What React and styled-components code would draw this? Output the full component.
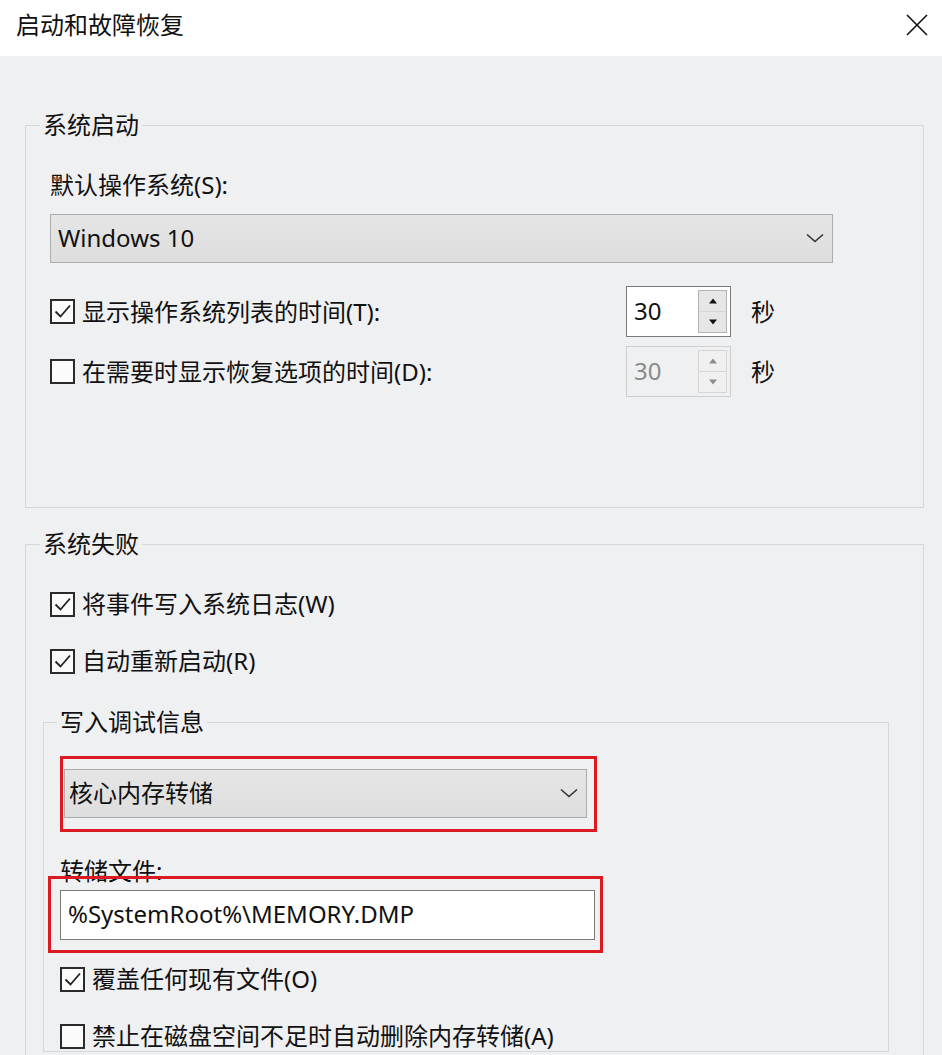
import styled, { createGlobalStyle } from 'styled-components';

const GlobalStyle = createGlobalStyle`
  html, body {
    margin: 0;
    padding: 0;
    background: #eff0f2;
  }
  * {
    box-sizing: border-box;
  }
`;

const font = `"Noto Sans", "Noto Sans CJK SC", sans-serif`;

const Window = styled.div`
  width: 942px;
  height: 1055px;
  overflow: hidden;
  background: #eff0f2;
  font-family: ${font};
  font-size: 24px;
  color: #111;
`;

const TitleBar = styled.header`
  height: 56px;
  background: #fff;
  display: flex;
  align-items: center;
  justify-content: space-between;
  padding: 0 14px 6px 16px;
`;

const Title = styled.h1`
  margin: 0;
  font-size: 24px;
  font-weight: 400;
  line-height: 30px;
  color: #111;
`;

const CloseButton = styled.button`
  border: 0;
  padding: 0;
  background: none;
  width: 22px;
  height: 22px;
  display: block;
  svg {
    display: block;
  }
`;

const Body = styled.main`
  padding: 54px 0 0 25px;
`;

const Group = styled.fieldset`
  margin: ${p => p.$inner ? '31px 0 0 -7px' : `${p.$top || 0}px 0 0 0`};
  width: ${p => p.$inner ? 846 : 899}px;
  min-width: 0;
  border: 1px solid #d6d7d9;
  padding: ${p => p.$inner ? '19px 0 0 16px' : `30px 0 ${p.$bottom || 0}px 24px`};
`;

const Legend = styled.legend`
  margin-left: ${p => p.$inner ? -3 : -10}px;
  padding: 0 3px;
  font-size: 24px;
  line-height: 30px;
  color: #111;
`;

const Label = styled.div`
  line-height: 30px;
  margin-top: ${p => p.$top || 0}px;
`;

const Select = styled.div`
  width: ${p => p.$width}px;
  height: 49px;
  margin-top: ${p => p.$top || 0}px;
  border: 1px solid #adadad;
  background: linear-gradient(#e5e5e5, #dedede);
  display: flex;
  align-items: center;
  justify-content: space-between;
  padding: 0 8px 2px ${p => p.$pad || 7}px;
  line-height: 30px;
  svg {
    display: block;
  }
`;

const TimeRow = styled.div`
  display: grid;
  grid-template-columns: 556px 105px auto;
  column-gap: 20px;
  align-items: center;
  margin-top: ${p => p.$top}px;
`;

const CheckRow = styled.label`
  display: flex;
  align-items: center;
  gap: 7px;
  height: 30px;
  line-height: 30px;
  margin-top: ${p => p.$top || 0}px;
  white-space: nowrap;
`;

const Box = styled.span`
  width: 25px;
  height: 25px;
  flex: none;
  border: 2px solid #2b2b2b;
  background: #fbfbfb;
  display: flex;
  align-items: center;
  justify-content: center;
`;

const Spin = styled.div`
  width: 105px;
  height: 51px;
  display: flex;
  border: 1px solid ${p => p.$disabled ? '#cfcfcf' : '#7a7a7a'};
  background: ${p => p.$disabled ? '#eff0f2' : '#fff'};
`;

const SpinValue = styled.span`
  flex: 1;
  padding: 0 0 3px 7px;
  display: flex;
  align-items: center;
  color: ${p => p.$disabled ? '#8a8a8a' : '#111'};
`;

const SpinButtons = styled.div`
  width: 29px;
  margin: 3px 3px 3px 0;
  display: flex;
  flex-direction: column;
  border: 1px solid ${p => p.$disabled ? '#d6d6d6' : '#b3b3b3'};
`;

const SpinButton = styled.span`
  flex: 1;
  display: flex;
  align-items: center;
  justify-content: center;
  background: ${p => p.$disabled ? '#f0f0f0' : '#e6e6e6'};
  & + & {
    border-top: 1px solid ${p => p.$disabled ? '#d6d6d6' : '#b3b3b3'};
  }
  svg {
    display: block;
  }
`;

const Unit = styled.span`
  line-height: 30px;
`;

const Highlight = styled.div`
  position: relative;
  width: ${p => p.$width}px;
  margin: ${p => p.$margin};
  padding: ${p => p.$pad};
  border: 3px solid #dc1a22;
`;

const TextInput = styled.div`
  width: 535px;
  height: 50px;
  border: 1px solid #7a7a7a;
  background: #fff;
  display: flex;
  align-items: center;
  padding: 0 0 3px 7px;
  line-height: 30px;
`;

const Chevron = () => (
  <svg width="18" height="10" viewBox="0 0 18 10">
    <path d="M1 1.5 L9 8.5 L17 1.5" fill="none" stroke="#333" strokeWidth="1.6" />
  </svg>
);

const Check = () => (
  <svg width="19" height="19" viewBox="0 0 19 19">
    <path d="M2.5 9.5 L7.5 14.5 L17 3.5" fill="none" stroke="#222" strokeWidth="1.8" />
  </svg>
);

const CheckBox = ({ checked, children, top }) => (
  <CheckRow $top={top}>
    <Box>{checked ? <Check /> : null}</Box>
    {children}
  </CheckRow>
);

const Arrow = ({ down, disabled }) => (
  <svg width="10" height="6" viewBox="0 0 10 6">
    <path
      d={down ? 'M1 0.5 L9 0.5 L5 5.5 Z' : 'M1 5.5 L9 5.5 L5 0.5 Z'}
      fill={disabled ? '#8c8c8c' : '#111'}
    />
  </svg>
);

const SpinBox = ({ value, disabled }) => (
  <Spin $disabled={disabled}>
    <SpinValue $disabled={disabled}>{value}</SpinValue>
    <SpinButtons $disabled={disabled}>
      <SpinButton $disabled={disabled}><Arrow disabled={disabled} /></SpinButton>
      <SpinButton $disabled={disabled}><Arrow down disabled={disabled} /></SpinButton>
    </SpinButtons>
  </Spin>
);

const App = () => (
  <Window>
    <GlobalStyle />
    <TitleBar>
      <Title>启动和故障恢复</Title>
      <CloseButton aria-label="关闭">
        <svg width="22" height="22" viewBox="0 0 22 22">
          <path d="M1 1 L21 21 M21 1 L1 21" stroke="#111" strokeWidth="1.6" />
        </svg>
      </CloseButton>
    </TitleBar>
    <Body>
      <Group $bottom={110}>
        <Legend>系统启动</Legend>
        <Label>默认操作系统(S):</Label>
        <Select $width={783} $top={14}>
          <span>Windows 10</span>
          <Chevron />
        </Select>
        <TimeRow $top={23}>
          <CheckBox checked>显示操作系统列表的时间(T):</CheckBox>
          <SpinBox value="30" />
          <Unit>秒</Unit>
        </TimeRow>
        <TimeRow $top={9}>
          <CheckBox>在需要时显示恢复选项的时间(D):</CheckBox>
          <SpinBox value="30" disabled />
          <Unit>秒</Unit>
        </TimeRow>
      </Group>

      <Group $top={21} $bottom={40}>
        <Legend>系统失败</Legend>
        <CheckBox checked>将事件写入系统日志(W)</CheckBox>
        <CheckBox checked top={27}>自动重新启动(R)</CheckBox>
        <Group $inner>
          <Legend $inner>写入调试信息</Legend>
          <Highlight $width={537} $margin="0" $pad="10px 7px 11px 1px">
            <Select $width={523} $pad={4}>
              <span>核心内存转储</span>
              <Chevron />
            </Select>
          </Highlight>
          <Label $top={24}>转储文件:</Label>
          <Highlight $width={555} $margin="-10px 0 0 -12px" $pad="11px 5px 10px 9px">
            <TextInput>%SystemRoot%\MEMORY.DMP</TextInput>
          </Highlight>
          <CheckBox checked top={11}>覆盖任何现有文件(O)</CheckBox>
          <CheckBox top={27}>禁止在磁盘空间不足时自动删除内存转储(A)</CheckBox>
        </Group>
      </Group>
    </Body>
  </Window>
);

export default App;
